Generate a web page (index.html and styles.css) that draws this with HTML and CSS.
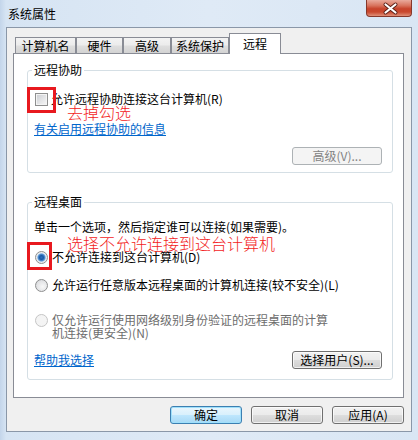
FILE: index.html
```html
<!DOCTYPE html>
<html>
<head>
<meta charset="utf-8">
<title>系统属性</title>
<link rel="stylesheet" href="styles.css">
</head>
<body>
<div class="window">
  <div class="titlebar">
    <span class="title">系统属性</span>
    <div class="close">
      <svg width="46" height="17" viewBox="0 0 46 17">
        <path d="M19.5 4.5 L29.5 12.5 M29.5 4.5 L19.5 12.5" stroke="#5a1f16" stroke-width="4" stroke-linecap="round" fill="none"/>
        <path d="M19.5 4.5 L29.5 12.5 M29.5 4.5 L19.5 12.5" stroke="#ffffff" stroke-width="2.2" stroke-linecap="round" fill="none"/>
      </svg>
    </div>
  </div>
  <div class="client">
    <div class="tabs">
      <div class="tab t1">计算机名</div>
      <div class="tab t2">硬件</div>
      <div class="tab t3">高级</div>
      <div class="tab t4">系统保护</div>
      <div class="tab t5 active">远程</div>
    </div>
    <div class="panel">
      <fieldset class="group g1">
        <legend>远程协助</legend>
        <div class="row check-row"><span class="checkbox"></span><span>允许远程协助连接这台计算机(R)</span></div>
        <a class="link info-link">有关启用远程协助的信息</a>
        <div class="btn-row"><span class="btn disabled">高级(V)...</span></div>
      </fieldset>
      <fieldset class="group g2">
        <legend>远程桌面</legend>
        <div class="desc">单击一个选项，然后指定谁可以连接(如果需要)。</div>
        <div class="row radio-row r1"><span class="radio checked"></span><span>不允许连接到这台计算机(D)</span></div>
        <div class="row radio-row r2"><span class="radio"></span><span>允许运行任意版本远程桌面的计算机连接(较不安全)(L)</span></div>
        <div class="row radio-row r3 dim"><span class="radio off"></span><span class="wrap-text">仅允许运行使用网络级别身份验证的远程桌面的计算机连接(更安全)(N)</span></div>
        <div class="bottom-row"><a class="link">帮助我选择</a><span class="btn">选择用户(S)...</span></div>
      </fieldset>
      <div class="mark box1"></div>
      <div class="note note1">去掉勾选</div>
      <div class="mark box2"></div>
      <div class="note note2">选择不允许连接到这台计算机</div>
    </div>
    <div class="actions">
      <span class="btn wide default">确定</span>
      <span class="btn wide">取消</span>
      <span class="btn wide">应用(A)</span>
    </div>
  </div>
</div>
</body>
</html>
```
FILE: styles.css
```css
* { box-sizing: border-box; }
html, body { margin: 0; padding: 0; }
body {
  width: 418px;
  height: 440px;
  overflow: hidden;
  font-family: "Noto Sans CJK SC", "Liberation Sans", sans-serif;
  font-size: 12px;
  color: #000;
}
.window {
  width: 418px;
  height: 440px;
  display: flex;
  flex-direction: column;
  background: linear-gradient(90deg, #c3d5ea 0px, #d6e4f3 6px, #dfeaf6 50%, #d9e6f4 100%);
}
.titlebar {
  height: 27px;
  display: flex;
  align-items: flex-start;
  padding: 0 6px 0 8px;
}
.title {
  line-height: 27px;
  font-size: 12px;
}
.close {
  margin-left: auto;
  width: 46px;
  height: 17px;
  border: 1px solid #86382b;
  border-top: none;
  border-radius: 0 0 4px 4px;
  background: linear-gradient(180deg, #e9aa9c 0%, #d8735d 35%, #c7432b 55%, #c9492f 75%, #e0917a 100%);
  overflow: hidden;
}
.close svg { display: block; margin: 0 0 0 -1px; }
.client {
  margin: 0 6px;
  height: 405px;
  border: 1px solid #8a97a8;
  background: #f0f0f0;
  padding: 5px 7px 0 6px;
  display: flex;
  flex-direction: column;
}
.tabs {
  display: flex;
  align-items: flex-end;
  height: 20px;
  padding-left: 2px;
}
.tab {
  height: 16px;
  border: 1px solid #898c95;
  border-bottom: none;
  background: linear-gradient(180deg, #f3f3f3 0%, #ececec 45%, #dedede 55%, #d3d3d3 100%);
  text-align: center;
  line-height: 15px;
  font-size: 12px;
}
.t1 { width: 61px; }
.t2 { width: 47px; }
.t3 { width: 48px; }
.t4 { width: 58px; }
.t5 { width: 52px; }
.tab.active {
  height: 21px;
  margin-bottom: -1px;
  background: #ffffff;
  position: relative;
  z-index: 1;
  line-height: 19px;
}
.panel {
  position: relative;
  width: 391px;
  height: 345px;
  border: 1px solid #898c95;
  background: #ffffff;
  padding: 0 10px 0 13px;
}
.group {
  margin: 0;
  border: 1px solid #d5dfe5;
  border-radius: 3px;
  padding: 0 10px 7px 6px;
  min-width: 0;
}
.group legend {
  padding: 0 2px;
  margin-left: -2px;
  line-height: 14px;
  font-size: 12px;
}
.g1 { margin-top: 9px; }
.g2 { margin-top: 22px; padding-bottom: 10px; }
.row {
  display: flex;
  align-items: center;
  line-height: 14px;
}
.check-row { margin-top: 15px; }
.checkbox {
  width: 13px;
  height: 13px;
  margin: 0 3px 0 1px;
  border: 1px solid #8e8f8f;
  background: linear-gradient(135deg, #c9ccd1 0%, #e4e5e7 55%, #f7f7f7 100%);
  box-shadow: inset 0 0 0 1px #f4f4f4;
  flex: none;
}
.link {
  display: block;
  width: fit-content;
  color: #0066cc;
  text-decoration: underline;
  line-height: 14px;
}
.info-link { margin-top: 16px; }
.btn-row {
  display: flex;
  justify-content: flex-end;
  margin-top: 11px;
}
.btn {
  display: inline-block;
  height: 18px;
  width: 90px;
  border: 1px solid #707070;
  border-radius: 3px;
  background: linear-gradient(180deg, #f2f2f2 0%, #ebebeb 48%, #dddddd 52%, #cfcfcf 100%);
  box-shadow: inset 0 0 0 1px rgba(255,255,255,0.7);
  text-align: center;
  line-height: 16px;
  font-size: 12px;
  color: #000;
}
.btn.disabled {
  border-color: #adb2b5;
  background: #f4f4f4;
  color: #838383;
  box-shadow: none;
}
.desc {
  margin-top: 11px;
  line-height: 14px;
}
.radio {
  width: 13px;
  height: 13px;
  border-radius: 50%;
  border: 1px solid #8e8f8f;
  background: radial-gradient(circle at 60% 60%, #f8f8f8 0%, #e2e3e5 60%, #c9cbcf 100%);
  margin: 0 4px 0 1px;
  flex: none;
  position: relative;
}
.radio.checked {
  background: radial-gradient(circle at 50% 50%, #2a6fbd 0px, #1d5aa5 2px, #5596d7 3.5px, #dfe6ee 4.5px, #f4f4f4 6px);
}
.radio.off {
  border-color: #c5c5c5;
  background: #f4f4f4;
}
.r1 { margin-top: 16px; }
.r2 { margin-top: 14px; }
.r3 {
  margin-top: 21px;
  align-items: flex-start;
  line-height: 13px;
}
.r3 .radio { margin-top: 1px; }
.wrap-text { width: 280px; }
.dim { color: #6d6d6d; }
.bottom-row {
  margin-top: 12px;
  height: 18px;
  display: flex;
  align-items: center;
  justify-content: space-between;
}
.actions {
  margin-top: 8px;
  display: flex;
  justify-content: flex-end;
  gap: 9px;
}
.btn.wide { width: 72px; }
.btn.default {
  border-color: #3c7fb1;
  background: linear-gradient(180deg, #eaf6fd 0%, #d9f0fc 48%, #bee6fd 52%, #a7d9f5 100%);
  box-shadow: inset 0 0 0 1px #9fe0fb;
}
.mark {
  position: absolute;
  border: 3px solid #e8191f;
}
.box1 { left: 13px; top: 33px; width: 29px; height: 26px; }
.box2 { left: 13px; top: 188px; width: 25px; height: 28px; }
.note {
  position: absolute;
  color: #f21c1c;
  font-size: 16px;
  font-weight: 300;
  line-height: 16px;
  white-space: nowrap;
}
.note1 { left: 53px; top: 50px; }
.note2 { left: 53px; top: 181px; }
```
